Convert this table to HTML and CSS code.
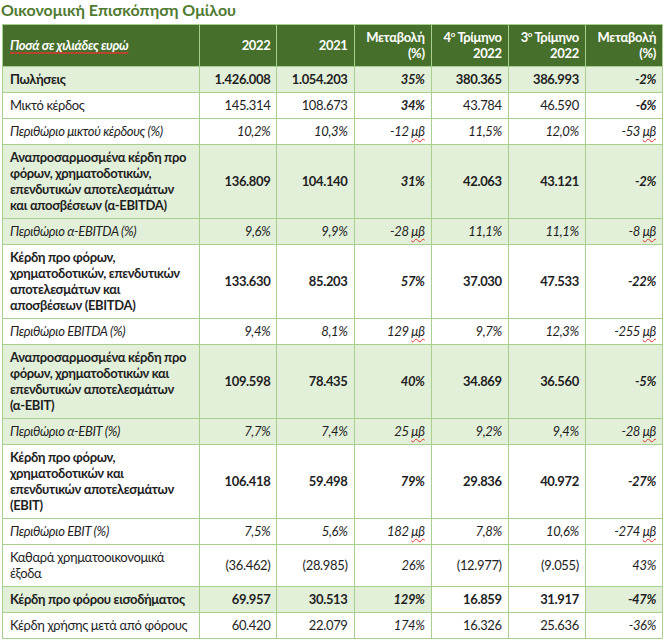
FILE: index.html
```html
<!DOCTYPE html>
<html lang="el">
<head>
<meta charset="utf-8">
<title>Οικονομική Επισκόπηση Ομίλου</title>
<link rel="stylesheet" href="styles.css">
</head>
<body>
<h1 class="title">Οικονομική Επισκόπηση Ομίλου</h1>
<table class="fin">
  <colgroup>
    <col class="c-label">
    <col class="c-num"><col class="c-num"><col class="c-num"><col class="c-num"><col class="c-num"><col class="c-num">
  </colgroup>
  <thead>
    <tr>
      <th class="lbl"><span class="unit">Ποσά σε χιλιάδες ευρώ</span></th>
      <th>2022</th>
      <th>2021</th>
      <th>Μεταβολή<br>(%)</th>
      <th>4<sup>ο</sup> Τρίμηνο<br>2022</th>
      <th>3<sup>ο</sup> Τρίμηνο<br>2022</th>
      <th>Μεταβολή<br>(%)</th>
    </tr>
  </thead>
  <tbody>
    <tr class="g b">
      <td class="lbl">Πωλήσεις</td>
      <td>1.426.008</td><td>1.054.203</td><td class="i">35%</td><td>380.365</td><td>386.993</td><td class="i">-2%</td>
    </tr>
    <tr>
      <td class="lbl">Μικτό κέρδος</td>
      <td>145.314</td><td>108.673</td><td class="i bi">34%</td><td>43.784</td><td>46.590</td><td class="i bi">-6%</td>
    </tr>
    <tr class="it">
      <td class="lbl">Περιθώριο μικτού κέρδους (%)</td>
      <td>10,2%</td><td>10,3%</td><td>-12 <span class="sp">μβ</span></td><td>11,5%</td><td>12,0%</td><td>-53 <span class="sp">μβ</span></td>
    </tr>
    <tr class="g b">
      <td class="lbl">Αναπροσαρμοσμένα κέρδη προ<br>φόρων, χρηματοδοτικών,<br>επενδυτικών αποτελεσμάτων<br>και αποσβέσεων (α-EBITDA)</td>
      <td>136.809</td><td>104.140</td><td class="i">31%</td><td>42.063</td><td>43.121</td><td class="i">-2%</td>
    </tr>
    <tr class="g it">
      <td class="lbl">Περιθώριο α-EBITDA (%)</td>
      <td>9,6%</td><td>9,9%</td><td>-28 <span class="sp">μβ</span></td><td>11,1%</td><td>11,1%</td><td>-8 <span class="sp">μβ</span></td>
    </tr>
    <tr class="b">
      <td class="lbl">Κέρδη προ φόρων,<br>χρηματοδοτικών, επενδυτικών<br>αποτελεσμάτων και<br>αποσβέσεων (EBITDA)</td>
      <td>133.630</td><td>85.203</td><td class="i">57%</td><td>37.030</td><td>47.533</td><td class="i">-22%</td>
    </tr>
    <tr class="it">
      <td class="lbl">Περιθώριο EBITDA (%)</td>
      <td>9,4%</td><td>8,1%</td><td>129 <span class="sp">μβ</span></td><td>9,7%</td><td>12,3%</td><td>-255 <span class="sp">μβ</span></td>
    </tr>
    <tr class="g b">
      <td class="lbl">Αναπροσαρμοσμένα κέρδη προ<br>φόρων, χρηματοδοτικών και<br>επενδυτικών αποτελεσμάτων<br>(α-EBIT)</td>
      <td>109.598</td><td>78.435</td><td class="i">40%</td><td>34.869</td><td>36.560</td><td class="i">-5%</td>
    </tr>
    <tr class="g it">
      <td class="lbl">Περιθώριο α-EBIT (%)</td>
      <td>7,7%</td><td>7,4%</td><td>25 <span class="sp">μβ</span></td><td>9,2%</td><td>9,4%</td><td>-28 <span class="sp">μβ</span></td>
    </tr>
    <tr class="b">
      <td class="lbl">Κέρδη προ φόρων,<br>χρηματοδοτικών και<br>επενδυτικών αποτελεσμάτων<br>(EBIT)</td>
      <td>106.418</td><td>59.498</td><td class="i">79%</td><td>29.836</td><td>40.972</td><td class="i">-27%</td>
    </tr>
    <tr class="it">
      <td class="lbl">Περιθώριο EBIT (%)</td>
      <td>7,5%</td><td>5,6%</td><td>182 <span class="sp">μβ</span></td><td>7,8%</td><td>10,6%</td><td>-274 <span class="sp">μβ</span></td>
    </tr>
    <tr>
      <td class="lbl">Καθαρά χρηματοοικονομικά<br>έξοδα</td>
      <td>(36.462)</td><td>(28.985)</td><td class="i">26%</td><td>(12.977)</td><td>(9.055)</td><td class="i">43%</td>
    </tr>
    <tr class="g b">
      <td class="lbl">Κέρδη προ φόρου εισοδήματος</td>
      <td>69.957</td><td>30.513</td><td class="i">129%</td><td class="w">16.859</td><td class="w">31.917</td><td class="i">-47%</td>
    </tr>
    <tr>
      <td class="lbl">Κέρδη χρήσης μετά από φόρους</td>
      <td>60.420</td><td>22.079</td><td class="i">174%</td><td>16.326</td><td>25.636</td><td class="i">-36%</td>
    </tr>
  </tbody>
</table>
</body>
</html>
```

FILE: styles.css
```css
html, body {
  margin: 0;
  padding: 0;
  background: #ffffff;
}

body {
  font-family: Lato, "Open Sans", "Noto Sans", sans-serif;
  font-size: 13px;
  letter-spacing: -0.35px;
  color: #1e1e1e;
  padding: 0 0 0 2px;
}

.title {
  margin: 0 0 0 -1px;
  height: 24px;
  font-size: 16px;
  letter-spacing: 0;
  line-height: 19px;
  font-weight: 700;
  color: #4f7a31;
}

.fin {
  border-collapse: collapse;
  table-layout: fixed;
  width: 661px;
}

.c-label { width: 197px; }
.c-num { width: 77px; }

.fin th,
.fin td {
  border: 1px solid #a9cf8f;
  padding: 4px 6px 5px 7px;
  line-height: 16px;
  text-align: right;
  vertical-align: middle;
  white-space: nowrap;
}

.fin th {
  background: #476f2c;
  color: #ffffff;
  font-weight: 700;
}

.fin th sup {
  font-size: 8px;
  line-height: 0;
  vertical-align: 5px;
}

.fin .lbl {
  text-align: left;
}

.unit {
  font-style: italic;
  text-decoration: underline;
  text-decoration-color: #b5452f;
  text-decoration-thickness: 2px;
  text-underline-offset: 2px;
}

.g td {
  background: #e2efd9;
}

.g td.w {
  background: #ffffff;
}

.b td,
td.bi {
  font-weight: 700;
}

.it td {
  font-style: italic;
}

td.i {
  font-style: italic;
}

.sp {
  text-decoration: underline wavy #d9302c;
  text-decoration-thickness: 1px;
  text-underline-offset: 2px;
}
```
